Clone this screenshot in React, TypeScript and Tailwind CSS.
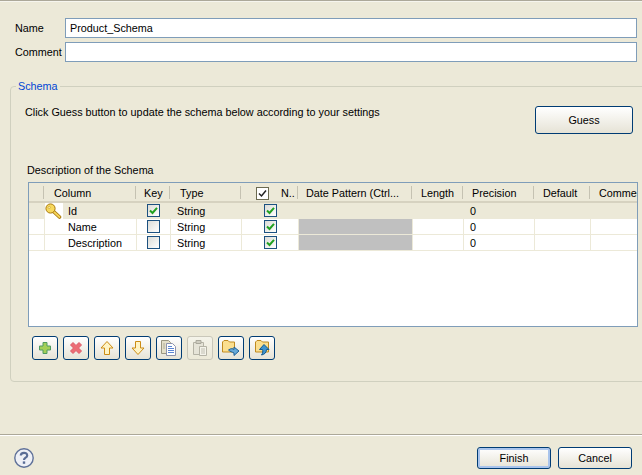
import React from 'react';

const COLS = 'grid grid-cols-[16px_92px_34px_71px_57px_114px_51px_71px_56px_60px]';

const headers = [
  { label: '', pad: 'pl-0' },
  { label: 'Column', pad: 'pl-[9px]' },
  { label: 'Key', pad: 'pl-[7px]' },
  { label: 'Type', pad: 'pl-[9px]' },
  { label: 'N..', pad: 'pl-[39px]' },
  { label: 'Date Pattern (Ctrl...', pad: 'pl-[7px]' },
  { label: 'Length', pad: 'pl-[8px]' },
  { label: 'Precision', pad: 'pl-[8px]' },
  { label: 'Default', pad: 'pl-[8px]' },
  { label: 'Comment', pad: 'pl-[8px]' },
];

const rows = [
  { name: 'Id', key: true, selected: true },
  { name: 'Name', key: false, selected: false },
  { name: 'Description', key: false, selected: false },
];

const Check = ({ checked }: { checked: boolean }) => (
  <div className="w-[13px] h-[13px] border border-[#1c5180] bg-linear-to-br from-[#dcdcd7] to-white flex items-center justify-center">
    {checked && (
      <svg width="9" height="9" viewBox="0 0 9 9">
        <path d="M1 4.5 L3.5 7 L8 1.8" fill="none" stroke="#21a121" strokeWidth="2" />
      </svg>
    )}
  </div>
);

const KeyIcon = () => (
  <svg width="17" height="16" viewBox="0 0 17 16">
    <path d="M8 8 L14.5 14" stroke="#a8780c" strokeWidth="3.6" strokeLinecap="round" />
    <path d="M8 8 L14.5 14" stroke="#f5d45a" strokeWidth="1.8" strokeLinecap="round" />
    <circle cx="5.5" cy="5.5" r="4.6" fill="#f7d95e" stroke="#a8780c" />
    <circle cx="4.2" cy="4.4" r="1.1" fill="#fff7c8" stroke="#c49a20" strokeWidth="0.6" />
  </svg>
);

const CopyIcon = () => (
  <svg width="18" height="18" viewBox="0 0 18 18">
    <path d="M1.5 1.5h7l2 2v11h-9z" fill="#e4dfc8" stroke="#9a9680" />
    <path d="M6.5 4.5h6l3 3v9h-9z" fill="#fff" stroke="#8d93ad" />
    <path d="M8 7.5h4M8 9.5h6M8 11.5h6M8 13.5h6" stroke="#5c86d4" />
    <path d="M3 5h2M3 7h2M3 9h2" stroke="#b0ad98" />
  </svg>
);

const PasteIcon = () => (
  <svg width="18" height="18" viewBox="0 0 18 18">
    <path d="M2.5 3.5h10v12h-10z" fill="#e6e4d8" stroke="#b5b3a6" />
    <path d="M5 1.5h5v3H5z" fill="#d0cec2" stroke="#aaa89c" />
    <path d="M8.5 7.5h7v9h-7z" fill="#f4f3ea" stroke="#b5b3a6" />
    <path d="M10 10h4M10 12h4M10 14h4" stroke="#c0beb2" />
  </svg>
);

const FolderOut = () => (
  <svg width="20" height="18" viewBox="0 0 20 18">
    <path d="M1.5 3 L3 1.5h4L8.5 3H13.5V13H1.5z" fill="#fbdf8f" stroke="#c08a20" />
    <path d="M7.5 11 C10 9 12 9.5 13 10.5V8l5 4-5 4.5V14 C11 13 9 12.5 7.5 11z" fill="#66a9d8" stroke="#1d5f96" />
  </svg>
);

const FolderIn = () => (
  <svg width="20" height="18" viewBox="0 0 20 18">
    <path d="M3.5 3 L5 1.5h4L10.5 3H16.5V13H3.5z" fill="#fbdf8f" stroke="#c08a20" />
    <path d="M12 5.5 L17 10.5h-2.5 C14.5 13.5 12.5 15.5 9.5 16 C11 14 11 12 10.5 10.5H7.5z" fill="#3f93cf" stroke="#125a8e" />
  </svg>
);

const tools = [
  <svg key="add" width="16" height="16" viewBox="0 0 16 16">
    <path d="M6 2.5h4v3.5h3.5v4H10v3.5H6V10H2.5V6H6z" fill="#a3cf58" stroke="#4f9a60" />
  </svg>,
  <svg key="del" width="16" height="16" viewBox="0 0 16 16">
    <path d="M2.5 5 L5 2.5 8 5.5 11 2.5 13.5 5 10.5 8 13.5 11 11 13.5 8 10.5 5 13.5 2.5 11 5.5 8z" fill="#ec6d74" stroke="#dd5a68" />
  </svg>,
  <svg key="up" width="16" height="16" viewBox="0 0 16 16">
    <path d="M8 1.5 L14 8H10.5V14.5H5.5V8H2z" fill="#fff4c4" stroke="#cc8c14" />
  </svg>,
  <svg key="down" width="16" height="16" viewBox="0 0 16 16">
    <path d="M8 14.5 L14 8H10.5V1.5H5.5V8H2z" fill="#fff4c4" stroke="#cc8c14" />
  </svg>,
  <CopyIcon key="copy" />,
  <PasteIcon key="paste" />,
  <FolderOut key="export" />,
  <FolderIn key="import" />,
];

const App: React.FC = () => {
  return (
    <div className="w-[642px] h-[475px] bg-[#ece9d8] flex flex-col overflow-hidden text-[10.8px] leading-[14px] text-black font-['Liberation_Sans',sans-serif]">
      <div className="h-px bg-[#aca899]" />
      <div className="h-px bg-[#f6f5ee]" />

      {/* Name / comment */}
      <div className="mt-[16px] flex flex-col gap-[4px] pl-[15px] pr-[5px]">
        <div className="flex items-center">
          <span className="w-[50px]">Name</span>
          <div className="flex-1 h-[20px] bg-white border border-[#7f9db9] pl-[4px] flex items-center">Product_Schema</div>
        </div>
        <div className="flex items-center">
          <span className="w-[50px]">Comment</span>
          <div className="flex-1 h-[20px] bg-white border border-[#7f9db9]" />
        </div>
      </div>

      {/* Schema group */}
      <fieldset className="mt-[17px] ml-[10px] w-[640px] border border-[#d0d0bf] rounded-[4px] pb-[21px]">
        <legend className="ml-[5px] px-[2px] text-[#0046d5]">Schema</legend>
        <div className="mt-[13px] pl-[14px] pr-[16px] flex items-start justify-between">
          <span className="-mt-[1px]">Click Guess button to update the schema below according to your settings</span>
          <button className="w-[98px] h-[28px] rounded-[3px] border border-[#003c74] bg-linear-to-b from-white to-[#e6e3d6]">Guess</button>
        </div>
        <div className="mt-[29px] ml-[16px]">Description of the Schema</div>

        {/* Table */}
        <div className="mt-[5px] ml-[17px] w-[610px] h-[145px] bg-white border border-[#7f9db9] overflow-hidden">
          <div className={`${COLS} h-[18px] bg-[#ece9d8]`}>
            {headers.map((h, i) => (
              <div key={i} className={`relative flex items-center pt-[1px] whitespace-nowrap overflow-hidden ${h.pad}`}>
                {i === 4 && (
                  <div className="absolute left-[14px] top-[4px] w-[13px] h-[13px] border border-[#6b6a50] bg-white flex items-center justify-center">
                    <svg width="9" height="9" viewBox="0 0 9 9">
                      <path d="M1 4.5 L3.5 7 L8 1.5" fill="none" stroke="#222" strokeWidth="1.5" />
                    </svg>
                  </div>
                )}
                {h.label}
                {i < 9 && <div className="absolute right-[1px] top-[3px] h-[13px] w-px bg-[#c5c2b2]" />}
              </div>
            ))}
          </div>
          <div className="h-[2px] bg-[#d6d2c0]" />
          {rows.map((r) => (
            <div key={r.name} className={`${COLS} h-[16px] border-b border-[#ece9d8] ${r.selected ? 'bg-[#ece9d8]' : ''}`}>
              <div className="border-r border-[#ece9d8]" />
              <div className="relative flex items-center pl-[23px] border-r border-[#ece9d8]">
                {r.selected && (
                  <div className="absolute left-0 top-0 w-[18px] h-[16px] bg-white">
                    <KeyIcon />
                  </div>
                )}
                {r.name}
              </div>
              <div className="flex items-center pl-[10px] border-r border-[#ece9d8]">
                <Check checked={r.key} />
              </div>
              <div className="flex items-center pl-[6px] border-r border-[#ece9d8]">String</div>
              <div className="flex items-center pl-[22px] border-r border-[#ece9d8]">
                <Check checked />
              </div>
              <div className={`border-r border-[#ece9d8] ${r.selected ? '' : 'bg-[#c0c0c0]'}`} />
              <div className="border-r border-[#ece9d8]" />
              <div className="flex items-center pl-[6px] border-r border-[#ece9d8]">0</div>
              <div className="border-r border-[#ece9d8]" />
              <div />
            </div>
          ))}
        </div>

        {/* Toolbar */}
        <div className="mt-[9px] ml-[21px] flex gap-[5px]">
          {tools.map((icon, i) => (
            <button
              key={i}
              className={`w-[26px] h-[24px] rounded-[3px] border flex items-center justify-center bg-linear-to-b ${
                i === 5 ? 'border-[#c9c7ba] from-[#f4f3ea] to-[#ece9d8]' : 'border-[#003c74] from-white to-[#e6e3d6]'
              }`}
            >
              {icon}
            </button>
          ))}
        </div>
      </fieldset>

      {/* Footer */}
      <div className="mt-auto">
        <div className="h-px bg-[#aca899]" />
        <div className="h-px bg-white" />
        <div className="h-[39px] pt-[12px] pl-[14px] pr-[10px] flex items-start justify-between">
          <svg width="20" height="20" viewBox="0 0 20 20">
            <circle cx="10" cy="10" r="9.2" fill="#eef0f6" stroke="#5f7199" strokeWidth="1.4" />
            <path d="M6.8 7.6 C6.8 3.9 13.2 3.9 13.2 7.4 C13.2 9.8 10 9.6 10 12" fill="none" stroke="#5a6d96" strokeWidth="2.2" />
            <rect x="8.8" y="13.4" width="2.4" height="2.4" fill="#5a6d96" />
          </svg>
          <div className="flex gap-[7px] -mt-[1px]">
            <button className="w-[74px] h-[22px] rounded-[3px] border border-[#003c74] bg-linear-to-b from-white to-[#e6e3d6] shadow-[inset_0_0_0_2px_#a9c4ec]">Finish</button>
            <button className="w-[74px] h-[22px] rounded-[3px] border border-[#003c74] bg-linear-to-b from-white to-[#e6e3d6]">Cancel</button>
          </div>
        </div>
      </div>
    </div>
  );
};

export default App;
